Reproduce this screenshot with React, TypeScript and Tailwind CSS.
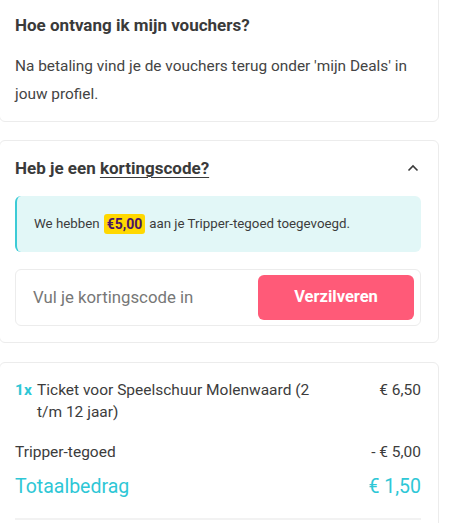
import React from "react";

export default function App() {
  return (
    <div className="w-[475px] h-[523px] overflow-hidden bg-white text-[#3c3c3c]" style={{ fontFamily: "Roboto, 'Liberation Sans', sans-serif" }}>
      {/* Card 1 */}
      <div className="w-[440px] -ml-[1px] -mt-[8px] border border-[#ececec] rounded-[6px] bg-white pt-[20px] pb-[13px] pl-[15px] pr-[17px]">
        <h2 className="text-[17px] leading-[24px] font-bold text-[#3a3a3a]">Hoe ontvang ik mijn vouchers?</h2>
        <p className="mt-[15px] text-[15.4px] leading-[28px] text-[#444]">
          Na betaling vind je de vouchers terug onder 'mijn Deals' in jouw profiel.
        </p>
      </div>

      {/* Card 2 */}
      <div className="w-[440px] -ml-[1px] mt-[18px] border border-[#ececec] rounded-[6px] bg-white pt-[15px] pb-[16px] pl-[15px] pr-[17px]">
        <div className="flex items-center justify-between">
          <h2 className="text-[17px] leading-[24px] font-bold text-[#3a3a3a]">
            Heb je een <span className="underline underline-offset-[3px] decoration-[1px]">kortingscode?</span>
          </h2>
          <svg width="12" height="8" viewBox="0 0 12 8" className="mr-[2px]">
            <path d="M1.5 6.5 L6 2 L10.5 6.5" fill="none" stroke="#3a3a3a" strokeWidth="1.6" />
          </svg>
        </div>
        <div className="mt-[16px] h-[56px] rounded-[6px] border-l-2 border-[#3ccbd6] bg-[#e2f7f7] flex items-center pl-[17px]">
          <span className="text-[13.3px] text-[#3c3c3c] flex items-center">
            We hebben
            <span className="mx-[4px] bg-[#ffd800] text-[#4a1466] font-bold rounded-[3px] px-[3px] h-[20px] leading-[20px] text-[14px]">€5,00</span>
            aan je Tripper-tegoed toegevoegd.
          </span>
        </div>
        <div className="mt-[17px] h-[57px] rounded-[6px] border border-[#ececec] flex items-center justify-between pl-[17px] pr-[6px]">
          <span className="text-[16.8px] text-[#777]">Vul je kortingscode in</span>
          <button className="w-[156px] h-[45px] rounded-[6px] bg-[#ff5a78] text-white font-bold text-[16.5px]">Verzilveren</button>
        </div>
      </div>

      {/* Card 3 */}
      <div className="w-[440px] -ml-[1px] mt-[19px] border border-[#ececec] rounded-[6px] bg-white pt-[16px] pl-[15px] pr-[17px] pb-[20px]">
        <div className="flex justify-between text-[15.5px] leading-[22px] text-[#3c3c3c]">
          <div className="flex w-[300px]">
            <span className="font-bold text-[#2ec7d6] w-[22px] shrink-0">1x</span>
            <span>Ticket voor Speelschuur Molenwaard (2 t/m 12 jaar)</span>
          </div>
          <span>€ 6,50</span>
        </div>
        <div className="mt-[18px] flex justify-between text-[15.5px] leading-[22px] text-[#3c3c3c]">
          <span>Tripper-tegoed</span>
          <span>- € 5,00</span>
        </div>
        <div className="mt-[10px] flex justify-between text-[19.5px] leading-[28px] text-[#2ec7d6]">
          <span>Totaalbedrag</span>
          <span>€ 1,50</span>
        </div>
        <div className="mt-[17px] h-[2px] bg-[#f2f2f2]" />
      </div>
    </div>
  );
}
